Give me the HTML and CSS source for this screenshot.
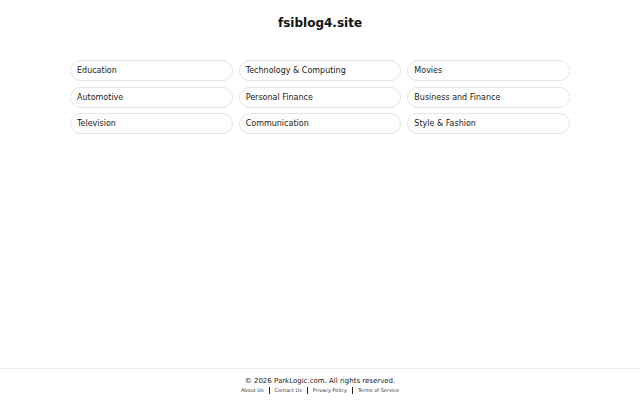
FILE: index.html
```html
<!DOCTYPE html>
<html>
<head>
    <title>fsiblog4.site</title>
    <link rel="stylesheet" href="styles.css">
</head>
<body>
  <div class="page">
    <h1 class="site-title">fsiblog4.site</h1>
    <div class="topics">
      <a class="topic" href="#">Education</a>
      <a class="topic" href="#">Technology &amp; Computing</a>
      <a class="topic" href="#">Movies</a>
      <a class="topic" href="#">Automotive</a>
      <a class="topic" href="#">Personal Finance</a>
      <a class="topic" href="#">Business and Finance</a>
      <a class="topic" href="#">Television</a>
      <a class="topic" href="#">Communication</a>
      <a class="topic" href="#">Style &amp; Fashion</a>
    </div>
  </div>
  <footer class="footer">
    <div class="copyright">&copy; 2026 ParkLogic.com. All rights reserved.</div>
    <div class="footer-links">
      <a href="#">About Us</a>
      <span class="sep"></span>
      <a href="#">Contact Us</a>
      <span class="sep"></span>
      <a href="#">Privacy Policy</a>
      <span class="sep"></span>
      <a href="#">Terms of Service</a>
    </div>
  </footer>
</body>
</html>
```

FILE: styles.css
```css
html, body {
    margin: 0;
    height: 100%;
}

body {
    display: flex;
    flex-direction: column;
    font-family: "DejaVu Sans", sans-serif;
    background-color: #fff;
    color: #111;
}

.page {
    flex: 1;
}

.site-title {
    margin: 16px 0 0;
    text-align: center;
    font-size: 12px;
    line-height: 14px;
    font-weight: bold;
    color: #111;
}

.topics {
    width: 500px;
    margin: 30px auto 0;
    display: grid;
    grid-template-columns: repeat(3, 1fr);
    column-gap: 6px;
    row-gap: 5.5px;
}

.topic {
    display: block;
    padding: 5px 6px;
    border: 1px solid #e3e3e3;
    border-radius: 11px;
    font-size: 8px;
    line-height: 9px;
    color: #1a1a1a;
    text-decoration: none;
}

.footer {
    border-top: 1px solid #eee;
    padding: 8px 0 5px;
    text-align: center;
}

.copyright {
    font-size: 7px;
    line-height: 9px;
    color: #222;
}

.footer-links {
    display: flex;
    justify-content: center;
    align-items: center;
    gap: 5px;
    height: 9px;
}

.footer-links a {
    font-size: 5px;
    line-height: 7px;
    color: #333;
    text-decoration: none;
}

.sep {
    width: 1px;
    height: 7px;
    background-color: #222;
}
```
